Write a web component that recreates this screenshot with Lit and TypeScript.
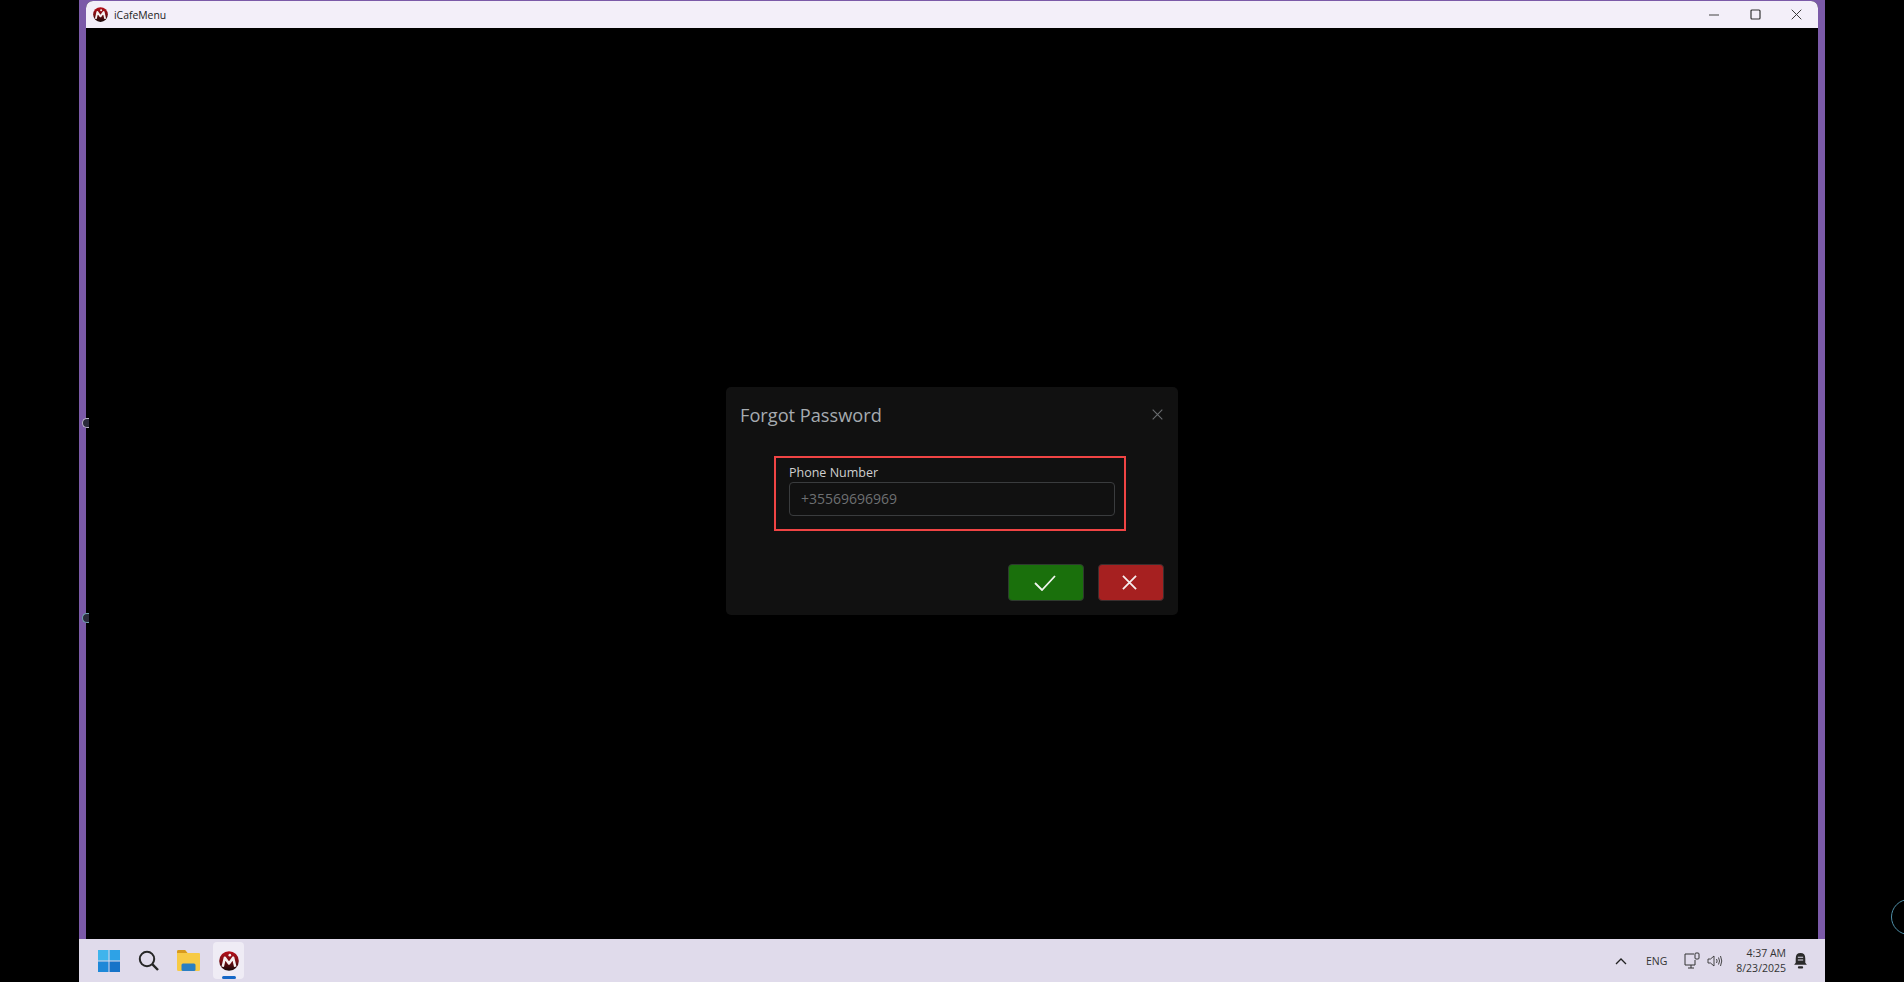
import { LitElement, html, css, svg } from 'lit';
import { customElement } from 'lit/decorators.js';

// red ball logo used in title bar and taskbar
const logo = (size: number) => html`<svg width=${size} height=${size} viewBox="0 0 24 24">
  <defs>
    <linearGradient id="ball" x1="0" y1="0" x2="0" y2="1">
      <stop offset="0" stop-color="#b8101a" />
      <stop offset="0.5" stop-color="#7a0e14" />
      <stop offset="1" stop-color="#140808" />
    </linearGradient>
  </defs>
  <circle cx="12" cy="12" r="11.8" fill="url(#ball)" />
  <path d="M4.5 19 L7 8 L12 15 L17 8 L19.5 19" fill="none" stroke="#f6f0f0" stroke-width="3" stroke-linejoin="round" />
  <circle cx="13" cy="5" r="1.6" fill="#f6f0f0" />
</svg>`;

const closeX = (size: number, color: string, width: number) => svg`<svg width=${size} height=${size} viewBox="0 0 16 16">
  <path d="M1 1 L15 15 M15 1 L1 15" stroke=${color} stroke-width=${width} fill="none" />
</svg>`;

@customElement('app-root')
export class AppRoot extends LitElement {
  static styles = css`
    :host {
      display: block;
      position: relative;
      width: 1904px;
      height: 982px;
      overflow: hidden;
      background: #000;
      font-family: 'Open Sans', 'Liberation Sans', sans-serif;
    }
    .screen {
      height: 100%;
      padding: 0 79px;
      box-sizing: border-box;
      display: flex;
      flex-direction: column;
    }
    .frame {
      flex: 1;
      min-height: 0;
      background: #7b5aa8;
      padding: 1px 7px 0;
      display: flex;
    }
    .window {
      flex: 1;
      display: flex;
      flex-direction: column;
      background: #000;
      border-radius: 7px 7px 0 0;
      overflow: hidden;
    }
    .titlebar {
      height: 27px;
      flex: none;
      background: #f3eff9;
      display: flex;
      align-items: center;
      padding-left: 7px;
      color: #222;
      font-size: 10.4px;
    }
    .titlebar .name {
      margin-left: 6px;
      flex: 1;
    }
    .winbtns {
      display: flex;
      align-items: center;
      gap: 30px;
      padding-right: 16px;
    }
    .winbtns svg {
      display: block;
    }
    .content {
      flex: 1;
      display: flex;
      justify-content: center;
      padding-top: 359px;
    }
    .dialog {
      width: 452px;
      height: 228px;
      box-sizing: border-box;
      background: #111;
      border-radius: 5px;
      padding: 14px;
      display: flex;
      flex-direction: column;
    }
    .head {
      display: flex;
      justify-content: space-between;
      align-items: center;
      height: 27px;
    }
    .head h2 {
      margin: 0;
      font-size: 18.2px;
      font-weight: 400;
      color: #a6abb0;
    }
    .head svg {
      margin-right: 1px;
    }
    .field {
      align-self: center;
      margin: 28px 0 0 -4px;
      width: 352px;
      height: 75px;
      box-sizing: border-box;
      border: 2px solid #f04444;
      padding: 6px 9px 0 13px;
    }
    .field label {
      display: block;
      font-size: 12.5px;
      font-weight: 500;
      line-height: 17px;
      color: #cfcfcf;
    }
    .field .input {
      margin-top: 1px;
      height: 34px;
      box-sizing: border-box;
      border: 1px solid #3a3c3e;
      border-radius: 4px;
      padding-left: 11px;
      line-height: 32px;
      font-size: 14px;
      color: #6e7072;
    }
    .actions {
      margin-top: auto;
      display: flex;
      justify-content: flex-end;
      gap: 14px;
    }
    .actions button {
      height: 37px;
      border: 1px solid #2e3a2e;
      border-radius: 4px;
      display: flex;
      align-items: center;
      justify-content: center;
      padding: 0 3px 0 0;
    }
    .ok {
      width: 76px;
      background: #1a700c;
    }
    .no {
      width: 66px;
      background: #a62020;
      border-color: #3a2e2e !important;
    }
    .taskbar {
      height: 43px;
      flex: none;
      background: #e0dbeb;
      display: flex;
      align-items: center;
      padding-left: 19px;
      color: #222;
    }
    .apps {
      display: flex;
      align-items: center;
      gap: 18px;
      flex: 1;
    }
    .apps svg {
      display: block;
    }
    .active {
      position: relative;
      width: 31px;
      height: 37px;
      margin-left: -5px;
      background: #efecf5;
      border-radius: 4px;
      display: flex;
      align-items: center;
      justify-content: center;
    }
    .active::after {
      content: '';
      position: absolute;
      left: 9px;
      bottom: 0;
      width: 14px;
      height: 3px;
      border-radius: 2px;
      background: #1668c7;
    }
    .tray {
      display: flex;
      align-items: center;
      color: #333;
      padding-right: 17px;
    }
    .tray svg {
      display: block;
    }
    .lang {
      margin: 0 17px 0 19px;
      font-size: 10.5px;
    }
    .clock {
      margin: 0 7px 0 13px;
      text-align: right;
      line-height: 15px;
      font-size: 10.5px;
    }
    /* bits of the desktop peeking out around the window */
    .ring {
      position: absolute;
      left: 1891px;
      top: 899px;
      width: 36px;
      height: 36px;
      box-sizing: border-box;
      border: 1px solid #4f8fa8;
      border-radius: 50%;
    }
    .pip {
      position: absolute;
      left: 82px;
      width: 7px;
      height: 10px;
      box-sizing: border-box;
      border: 1px solid #b9b4c8;
      border-right: none;
      border-radius: 5px 0 0 5px;
      background: #2a2a3a;
    }
    .pip.a { top: 418px; }
    .pip.b { top: 613px; border-color: #6fa4b0; }
  `;

  render() {
    return html`
      <div class="screen">
        <div class="frame">
          <div class="window">
            <div class="titlebar">
              ${logo(15)}
              <span class="name">iCafeMenu</span>
              <div class="winbtns">
                <svg width="11" height="11" viewBox="0 0 11 11"><path d="M0 6 H10" stroke="#444" stroke-width="1.2" /></svg>
                <svg width="11" height="11" viewBox="0 0 11 11"><rect x="1" y="1" width="9" height="9" rx="1" fill="none" stroke="#333" stroke-width="1.2" /></svg>
                ${closeX(11, '#333', 1.4)}
              </div>
            </div>
            <div class="content">
              <div class="dialog">
                <div class="head">
                  <h2>Forgot Password</h2>
                  ${closeX(11, '#6a6d70', 1.6)}
                </div>
                <div class="field">
                  <label>Phone Number</label>
                  <div class="input">+35569696969</div>
                </div>
                <div class="actions">
                  <button class="ok">
                    <svg width="22" height="16" viewBox="0 0 22 16"><path d="M1 8 L8 15 L21 1" fill="none" stroke="#f2f5f0" stroke-width="1.8" /></svg>
                  </button>
                  <button class="no">${closeX(15, '#f6eeee', 1.9)}</button>
                </div>
              </div>
            </div>
          </div>
        </div>
        <div class="taskbar">
          <div class="apps">
            <svg width="22" height="22" viewBox="0 0 22 22">
              <rect x="0" y="0" width="10.5" height="10.5" fill="#3fb4ec" />
              <rect x="11.5" y="0" width="10.5" height="10.5" fill="#2ea2e6" />
              <rect x="0" y="11.5" width="10.5" height="10.5" fill="#1e88d8" />
              <rect x="11.5" y="11.5" width="10.5" height="10.5" fill="#1673c8" />
            </svg>
            <svg width="21" height="21" viewBox="0 0 21 21">
              <circle cx="9" cy="9" r="7.2" fill="none" stroke="#262626" stroke-width="2" />
              <path d="M14.2 14.2 L20 20" stroke="#262626" stroke-width="2.4" />
            </svg>
            <svg width="23" height="21" viewBox="0 0 23 21">
              <path d="M0 1.5 Q0 0 1.5 0 H8 L10.5 3 H22 Q23 3 23 4 V19.5 Q23 21 21.5 21 H1.5 Q0 21 0 19.5 Z" fill="#f7ca45" />
              <path d="M0 1.5 Q0 0 1.5 0 H8 L10.5 3 H0 Z" fill="#d79a1e" />
              <rect x="4.5" y="13.5" width="14" height="7.5" rx="1.5" fill="#2a7fc4" />
            </svg>
            <div class="active">${logo(20)}</div>
          </div>
          <div class="tray">
            <svg width="12" height="8" viewBox="0 0 12 8"><path d="M1 7 L6 2 L11 7" fill="none" stroke="#222" stroke-width="1.3" /></svg>
            <span class="lang">ENG</span>
            <svg width="16" height="18" viewBox="0 0 16 18" style="margin-right:7px">
              <path d="M10 2 H1 V13 H11 V8 M4 16 H10 M7 13 V16" fill="none" stroke="#333" stroke-width="1" />
              <rect x="11" y="1" width="4" height="6" rx="1" fill="none" stroke="#333" stroke-width="1" />
            </svg>
            <svg width="16" height="14" viewBox="0 0 16 14">
              <path d="M1 5 H3.5 L7 2 V12 L3.5 9 H1 Z M9.5 5 Q10.8 7 9.5 9 M11.5 3.5 Q13.6 7 11.5 10.5 M13.5 2 Q16 7 13.5 12" fill="none" stroke="#333" stroke-width="0.9" />
            </svg>
            <div class="clock">4:37 AM<br />8/23/2025</div>
            <svg width="15" height="17" viewBox="0 0 14 16">
              <path d="M7 1 Q2.5 1 2.5 6 V10 L1 12 H13 L11.5 10 V6 Q11.5 1 7 1 Z" fill="#2a2a2a" />
              <rect x="4.5" y="13.5" width="5" height="2" rx="1" fill="#2a2a2a" />
              <path d="M4.5 5 H9.5 M4.5 7.5 H9.5" stroke="#e0dbeb" stroke-width="1" />
            </svg>
          </div>
        </div>
      </div>
      <div class="pip a"></div>
      <div class="pip b"></div>
      <div class="ring"></div>
    `;
  }
}
